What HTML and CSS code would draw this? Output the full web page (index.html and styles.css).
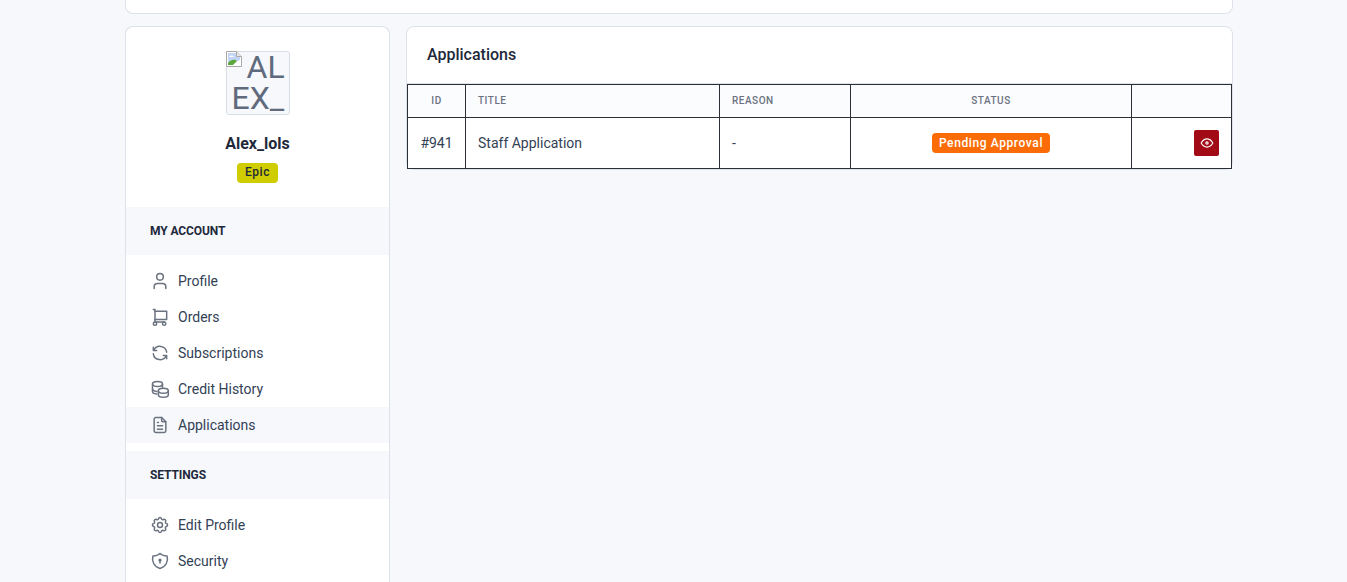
FILE: index.html
```html
<!DOCTYPE html>
<html lang="en">
<head>
<meta charset="utf-8">
<title>Applications</title>
<link rel="stylesheet" href="styles.css">
</head>
<body>
<div class="page">
  <div class="top-card"></div>
  <div class="columns">
    <aside class="sidebar">
      <div class="profile">
        <div class="avatar"><svg class="broken" viewBox="0 0 16 16" width="16" height="16"><path d="M0.5 0.5H10.5L15.5 5.5V15.5H0.5Z" fill="#fff" stroke="#a8a8a8"/><path d="M10.5 .5V5.5H15.5" fill="#e8e8e8" stroke="#a8a8a8"/><path d="M2 2H10V6H14V9L2 14Z" fill="#c3d5f5"/><path d="M2 14L2 12C5 8 9 8 11 10L7 14Z" fill="#5aa83c"/><path d="M3 6C4 4 7 4 8 6Z" fill="#fff"/><path d="M9 15L15 9V15Z" fill="#fff"/></svg>ALEX_</div>
        <div class="name">Alex_lols</div>
        <span class="rank">Epic</span>
      </div>
      <div class="section-head">MY ACCOUNT</div>
      <ul class="menu">
        <li class="item"><svg class="icon" viewBox="0 0 24 24"><circle cx="12" cy="7" r="4"/><path d="M5 21v-2a4 4 0 0 1 4-4h6a4 4 0 0 1 4 4v2"/></svg>Profile</li>
        <li class="item"><svg class="icon" viewBox="0 0 24 24"><circle cx="6" cy="20" r="2"/><circle cx="17" cy="20" r="2"/><path d="M17 18H6V3H4"/><path d="M6 5h14v10H6"/></svg>Orders</li>
        <li class="item"><svg class="icon" viewBox="0 0 24 24"><path d="M20 11A8.1 8.1 0 0 0 4.500 9M4 5v4h4"/><path d="M4 13a8.100 8.100 0 0 0 15.500 2m.5 4v-4h-4"/></svg>Subscriptions</li>
        <li class="item"><svg class="icon" viewBox="0 0 24 24"><ellipse cx="9" cy="6" rx="6" ry="3"/><path d="M3 6v6c0 1.300 2 2.500 5 3"/><path d="M3 12v3c0 1.500 2 2.700 5 3"/><path d="M15 6v4"/><ellipse cx="16" cy="14" rx="6" ry="3"/><path d="M10 14v5c0 1.700 2.700 3 6 3s6-1.300 6-3v-5"/></svg>Credit History</li>
        <li class="item current"><svg class="icon" viewBox="0 0 24 24"><path d="M14 3v4a1 1 0 0 0 1 1h4"/><path d="M17 21H7a2 2 0 0 1-2-2V5a2 2 0 0 1 2-2h7l5 5v11a2 2 0 0 1-2 2z"/><path d="M9 13h6M9 17h6M9 9h1"/></svg>Applications</li>
      </ul>
      <div class="section-head">SETTINGS</div>
      <ul class="menu">
        <li class="item"><svg class="icon" viewBox="0 0 24 24"><path d="M10.300 4.300c.4-1.800 3-1.800 3.400 0a1.700 1.700 0 0 0 2.600 1.100c1.500-.9 3.300.8 2.400 2.400a1.700 1.700 0 0 0 1 2.500c1.800.4 1.800 3 0 3.400a1.700 1.700 0 0 0-1 2.600c.9 1.500-.9 3.300-2.400 2.400a1.700 1.700 0 0 0-2.600 1c-.4 1.800-3 1.800-3.400 0a1.700 1.700 0 0 0-2.600-1c-1.500.9-3.300-.9-2.400-2.400a1.700 1.700 0 0 0-1-2.600c-1.800-.4-1.800-3 0-3.400a1.700 1.700 0 0 0 1-2.500c-.9-1.600.9-3.300 2.400-2.400 1 .6 2.300.1 2.600-1.100z"/><circle cx="12" cy="12" r="3"/></svg>Edit Profile</li>
        <li class="item"><svg class="icon" viewBox="0 0 24 24"><path d="M12 3a12 12 0 0 0 8.500 3A12 12 0 0 1 12 21 12 12 0 0 1 3.500 6 12 12 0 0 0 12 3"/><circle cx="12" cy="11" r="1"/><path d="M12 12v2.500"/></svg>Security</li>
      </ul>
    </aside>
    <main class="panel">
      <h1 class="panel-title">Applications</h1>
      <table class="table">
        <thead>
          <tr>
            <th class="col-id center">ID</th>
            <th class="col-title">TITLE</th>
            <th class="col-reason">REASON</th>
            <th class="col-status center">STATUS</th>
            <th class="col-action"></th>
          </tr>
        </thead>
        <tbody>
          <tr>
            <td class="center">#941</td>
            <td>Staff Application</td>
            <td>-</td>
            <td class="center"><span class="status">Pending Approval</span></td>
            <td class="right"><button class="view" type="button"><svg class="eye" viewBox="0 0 24 24"><circle cx="12" cy="12" r="2"/><path d="M22 12c-2.700 4.700-6 7-10 7s-7.300-2.300-10-7c2.700-4.700 6-7 10-7s7.300 2.300 10 7"/></svg></button></td>
          </tr>
        </tbody>
      </table>
    </main>
  </div>
</div>
</body>
</html>
```
FILE: styles.css
```css
* { box-sizing: border-box; }
html, body { margin: 0; height: 582px; overflow: hidden; }
body { background: #f6f8fc; font-family: Roboto, "Liberation Sans", sans-serif; color: #1e293b; font-size: 14px; }
.page { width: 1108px; margin-left: 125px; }
.top-card { height: 14px; background: #fff; border: 1px solid #dde1e9; border-top: 0; border-radius: 0 0 8px 8px; }
.columns { display: flex; gap: 16px; margin-top: 12px; align-items: flex-start; height: 556px; }
.sidebar { width: 265px; flex: none; align-self: stretch; background: #fff; border: 1px solid #dde1e9; border-bottom: 0; border-radius: 8px 8px 0 0; overflow: hidden; }
.profile { display: flex; flex-direction: column; align-items: center; padding-top: 24px; height: 180px; }
.avatar { width: 64px; height: 64px; padding-left: 5px; background: #f6f8fc; border: 1px solid #d8dde6; border-radius: 3px; font-size: 32px; line-height: 31px; color: #5f6b7c; text-indent: 15px; word-break: break-all; position: relative; }
.broken { position: absolute; left: -1px; top: -1px; }
.name { margin-top: 17px; font-size: 16px; font-weight: 700; line-height: 24px; color: #1e293b; }
.rank { margin-top: 7px; background: #cfcd00; color: #1e293b; font-size: 12px; font-weight: 500; letter-spacing: .5px; line-height: 14px; padding: 2px 8px 4px; border-radius: 4px; }
.section-head { height: 48px; background: #f6f8fc; padding-left: 24px; font-size: 12px; font-weight: 700; line-height: 49px; color: #1e293b; letter-spacing: -.1px; }
.menu { list-style: none; margin: 0; padding: 8px 0; }
.item { display: flex; align-items: center; gap: 8px; height: 36px; padding-left: 24px; color: #334155; font-size: 14px; }
.current { background: #f6f8fc; }
.icon { width: 20px; height: 20px; fill: none; stroke: #6b7280; stroke-width: 1.800; stroke-linecap: round; stroke-linejoin: round; flex: none; }
.panel { flex: 1; background: #fff; border: 1px solid #dde1e9; border-radius: 8px; }
.panel-title { margin: 0; height: 57px; padding: 0 20px; font-size: 16px; font-weight: 500; line-height: 56px; color: #1e293b; border-bottom: 1px solid #dde1e9; }
.table { width: 825px; border-collapse: collapse; table-layout: fixed; background: #fff; }
.table th, .table td { border: 1px solid #2b2f36; padding: 0 12px; text-align: left; }
.table th { height: 33px; padding-bottom: 1px; background: #fbfcfe; font-size: 10px; font-weight: 500; letter-spacing: .5px; color: #6b7280; }
.table td { height: 51px; font-size: 14px; color: #334155; }
.table .center { text-align: center; }
.table .right { text-align: right; }
.col-id { width: 58px; }
.col-title { width: 254px; }
.col-reason { width: 131px; }
.col-status { width: 281px; }
.status { display: inline-block; background: #fb6c07; color: #fff; font-size: 12px; font-weight: 500; letter-spacing: .6px; line-height: 20px; height: 20px; padding: 0 7px; border-radius: 4px; vertical-align: middle; }
.view { display: inline-flex; align-items: center; justify-content: center; width: 25px; height: 26px; padding: 0; border: 0; border-radius: 2px; background: #a20a16; vertical-align: middle; }
.eye { width: 14px; height: 14px; fill: none; stroke: #fff; stroke-width: 2; stroke-linecap: round; stroke-linejoin: round; }
```
